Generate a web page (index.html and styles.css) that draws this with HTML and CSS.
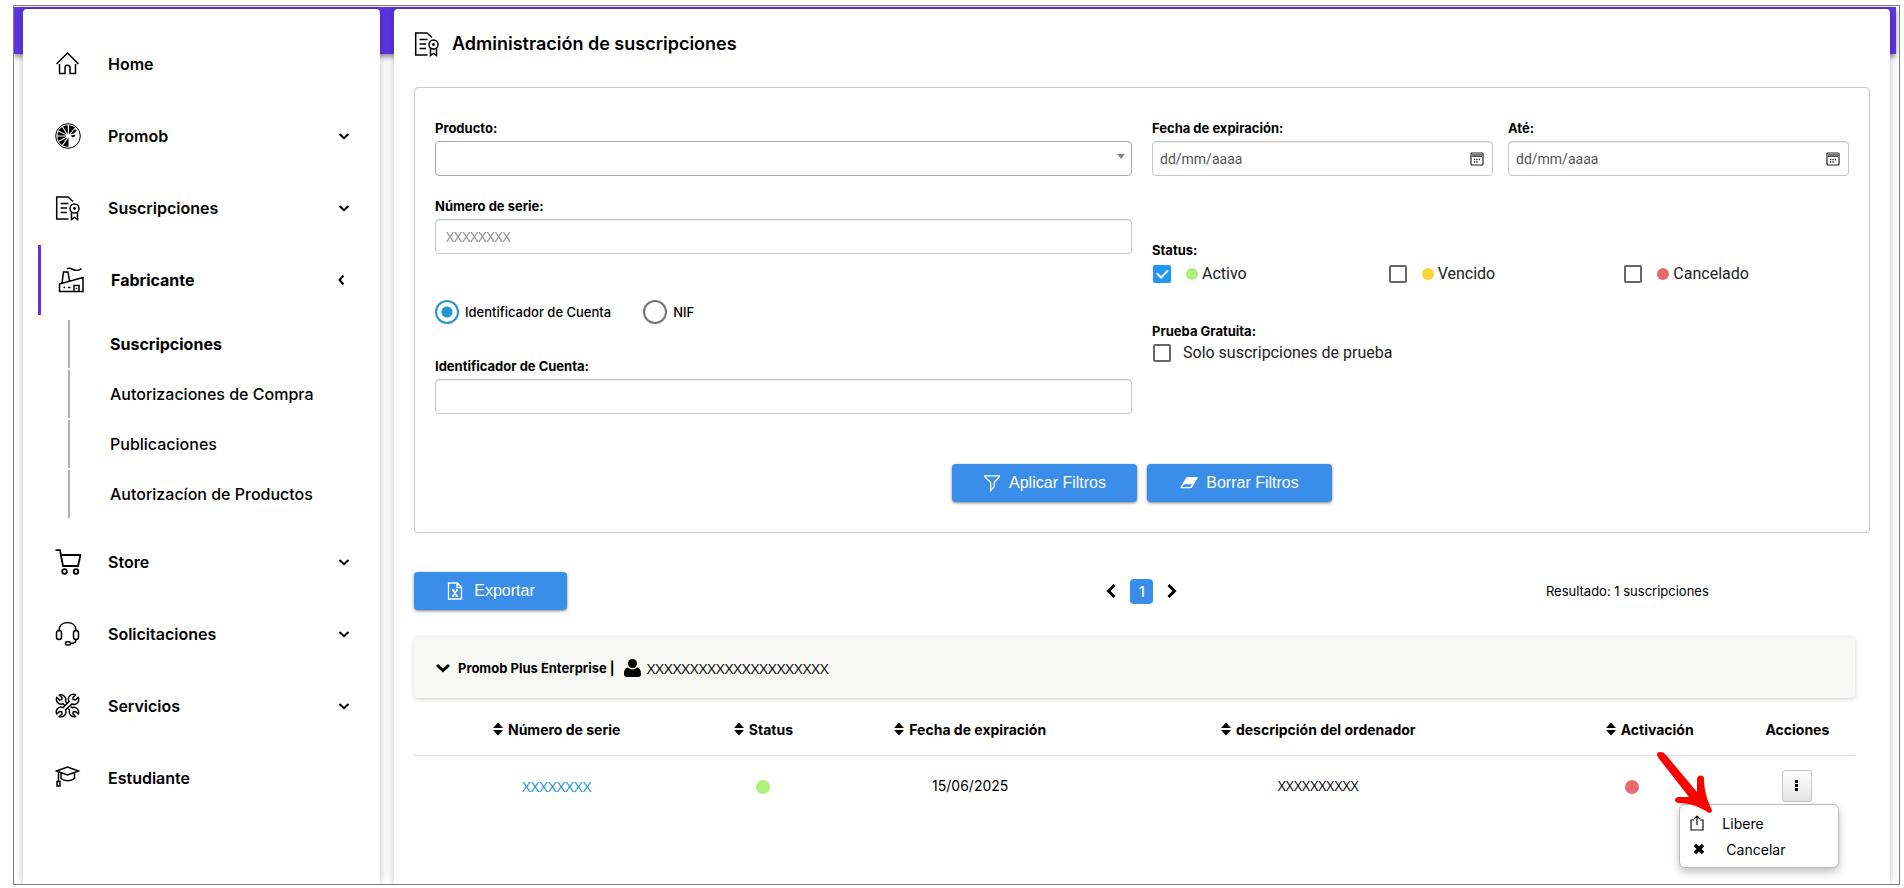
FILE: index.html
```html
<!DOCTYPE html>
<html lang="es">
<head>
  <meta charset="UTF-8">
  <title>Administración de suscripciones</title>
  <link rel="stylesheet" href="styles.css">
</head>
<body>
  <!-- Shared icons -->
  <svg class="sprite" aria-hidden="true">
    <symbol id="ico-doc" viewBox="0 0 26 26">
      <path d="M13.500 24H1.700V2H13l5 4.500M5.500 8.500h8M5.500 13h6.500M5.500 17.500h6.500"/>
      <circle cx="19.500" cy="13.500" r="4.500"/>
      <circle cx="19.500" cy="13.500" r="0.700"/>
      <path d="M16.500 17.500V24.500l3-2 3 2V17.500"/>
    </symbol>
    <symbol id="ico-down" viewBox="0 0 12 12">
      <path d="M1.500 4L6 8.200 10.500 4"/>
    </symbol>
    <symbol id="ico-sort" viewBox="0 0 10 14">
      <path d="M5 0.500L10 6H0zM5 13.500L10 8H0z"/>
    </symbol>
    <symbol id="ico-calendar" viewBox="0 0 14 14">
      <rect x="1" y="1" width="12" height="12" rx="1" fill="none" stroke="#222" stroke-width="1.200"/>
      <path d="M2 2h10v2H2z" fill="#777"/>
      <path d="M2 4.500h10" stroke="#222" stroke-width="0.800"/>
      <path d="M4 7.500h1.300M6.400 7.500h1.300M8.800 7.500h1.300M4 10h1.300M6.400 10h1.300" stroke="#222" stroke-width="1.300"/>
    </symbol>
  </svg>

  <div class="frame">
    <div class="topbar"></div>

    <div class="shell">
      <nav class="sidebar">
        <ul class="menu">
          <li><a class="menu-item" href="#">
            <svg class="ico" viewBox="0 0 26 26"><path d="M1.500 13L12.500 2 23.500 13M4.500 13v9.500h5.500v-6c0-3 5-3 5 0v6h5.500V13"/></svg>
            <span>Home</span>
          </a></li>
          <li><a class="menu-item" href="#">
            <svg class="ico thin" viewBox="0 0 26 26">
              <circle cx="13" cy="13" r="12.300"/>
              <path class="solid" d="M12.800 11.500L8 3.700Q10.500 2.300 12.800 2.300zM14 11.500V2.300Q17.500 2.500 20 4.500zM11.800 11.800L3.500 7.500Q5 5 7.200 4.200zM11.500 12.600H2.500Q2.500 10.500 3.200 8.600zM11.500 13.600L3.300 18Q2.500 16 2.500 13.600zM12.300 14.300L7 22Q4.800 20.500 3.800 19zM13.500 14.500V23.700Q10.500 23.700 8 22.500zM15.500 11l4.500-5 1.500 1.500-2.500 3zM16 12.500l4.500-1-1 2.300-2.500.500z"/>
            </svg>
            <span>Promob</span>
            <svg class="arrow"><use href="#ico-down"/></svg>
          </a></li>
          <li><a class="menu-item" href="#">
            <svg class="ico"><use href="#ico-doc"/></svg>
            <span>Suscripciones</span>
            <svg class="arrow"><use href="#ico-down"/></svg>
          </a></li>
          <li><a class="menu-item active" href="#">
            <svg class="ico" viewBox="0 0 26 26">
              <path d="M1.500 17L25 10.500V24.500H1.500zM4 16L5.500 5h4.500l1.500 9M9 2c2-1.500 4-.500 6 .500s6 1.500 8.500-1M16 24v-5.500h5V24"/>
              <path d="M5.500 20.500H7M10 20.500h2.500M18.500 21v1"/>
            </svg>
            <span>Fabricante</span>
            <svg class="arrow" viewBox="0 0 12 12"><path d="M5.500 1.500L1.500 6 5.500 10.500"/></svg>
          </a>
            <ul class="submenu">
              <li><a class="current" href="#">Suscripciones</a></li>
              <li><a href="#">Autorizaciones de Compra</a></li>
              <li><a href="#">Publicaciones</a></li>
              <li><a href="#">Autorizacíon de Productos</a></li>
            </ul>
          </li>
          <li><a class="menu-item" href="#">
            <svg class="ico thick" viewBox="0 0 26 26">
              <path d="M0.500 1.200h4.500L8 17h15L25.500 6H6"/>
              <circle cx="9.500" cy="22.500" r="2.300"/><circle cx="21" cy="22.500" r="2.300"/>
            </svg>
            <span>Store</span>
            <svg class="arrow"><use href="#ico-down"/></svg>
          </a></li>
          <li><a class="menu-item" href="#">
            <svg class="ico" viewBox="0 0 26 26">
              <path d="M4 9.500C4 5 7 1.500 12.500 1.500S21 5 21 9.500M21 18.500c0 3-2 4-5.500 4"/>
              <rect x="1.500" y="9.500" width="5" height="9" rx="2.500"/>
              <rect x="18.500" y="9.500" width="5" height="9" rx="2.500"/>
              <rect x="10.500" y="20.800" width="5" height="3.200" rx="1.600"/>
            </svg>
            <span>Solicitaciones</span>
            <svg class="arrow"><use href="#ico-down"/></svg>
          </a></li>
          <li><a class="menu-item" href="#">
            <svg class="ico" viewBox="0 0 26 26">
              <path d="M20.500 2A4.800 4.800 0 0 0 14 8.500L8 14.500A4.800 4.800 0 0 0 1.800 21L4.500 18.500 6.800 18.800 7 21 4.500 23.500A4.800 4.800 0 0 0 10.500 17L17 11A4.800 4.800 0 0 0 23.200 4.500L20.500 7 18.200 6.700 18 4.500z"/>
              <path d="M11.500 10L10.500 8A4.800 4.800 0 0 0 4.500 2L7 4.500 6.800 6.700 4.500 7 1.800 4.500A4.800 4.800 0 0 0 8 10.800L9.500 12M13.500 15.500L14.500 17.500A4.800 4.800 0 0 0 20.500 23.500L18 21 18.200 18.800 20.500 18.500 23.200 21A4.800 4.800 0 0 0 17 14.700L15.500 13.500"/>
            </svg>
            <span>Servicios</span>
            <svg class="arrow"><use href="#ico-down"/></svg>
          </a></li>
          <li><a class="menu-item" href="#">
            <svg class="ico" viewBox="0 0 26 26">
              <path d="M1.500 6L12.500 2 23.500 6 12.500 10zM6 8v5.500c3 3 10.500 3 13.500 0V8M3.500 7v9.500M2 16.500h3v4.500H2z"/>
            </svg>
            <span>Estudiante</span>
          </a></li>
        </ul>
      </nav>

      <main class="content">
        <h1 class="page-title">
          <svg class="ico"><use href="#ico-doc"/></svg>
          Administración de suscripciones
        </h1>

        <form class="filters">
          <div class="filter-grid">
            <div class="column">
              <div class="field">
                <label for="producto">Producto:</label>
                <div class="select-wrap">
                  <select id="producto" class="control"><option></option></select>
                </div>
              </div>
              <div class="field">
                <label for="serie">Número de serie:</label>
                <input type="text" id="serie" class="control" placeholder="XXXXXXXX">
              </div>
              <div class="radios">
                <label><input type="radio" name="tipo" checked> Identificador de Cuenta</label>
                <label><input type="radio" name="tipo"> NIF</label>
              </div>
              <div class="field">
                <label for="cuenta">Identificador de Cuenta:</label>
                <input type="text" id="cuenta" class="control">
              </div>
            </div>

            <div class="column">
              <div class="dates">
                <div class="field">
                  <label for="desde">Fecha de expiración:</label>
                  <div class="control date">
                    <input type="text" id="desde" placeholder="dd/mm/aaaa">
                    <button type="button" aria-label="Abrir calendario"><svg><use href="#ico-calendar"/></svg></button>
                  </div>
                </div>
                <div class="field">
                  <label for="hasta">Até:</label>
                  <div class="control date">
                    <input type="text" id="hasta" placeholder="dd/mm/aaaa">
                    <button type="button" aria-label="Abrir calendario"><svg><use href="#ico-calendar"/></svg></button>
                  </div>
                </div>
              </div>
              <div class="checks status">
                <h2>Status:</h2>
                <div class="check-row">
                  <label><input type="checkbox" checked><i class="dot green"></i>Activo</label>
                  <label><input type="checkbox"><i class="dot yellow"></i>Vencido</label>
                  <label><input type="checkbox"><i class="dot red"></i>Cancelado</label>
                </div>
              </div>
              <div class="checks trial">
                <h2>Prueba Gratuita:</h2>
                <label><input type="checkbox">Solo suscripciones de prueba</label>
              </div>
            </div>
          </div>

          <div class="filter-actions">
            <button type="button" class="btn btn-filter">
              <svg viewBox="0 0 18 18"><path d="M1.500 1.800h15c.300 2-4.800 4.500-5.300 7v4l-3.500 3.700V8.800C7.200 6.300 1.200 3.800 1.500 1.800z" fill="none" stroke="#fff" stroke-width="1.300"/></svg>
              Aplicar Filtros
            </button>
            <button type="button" class="btn btn-filter">
              <svg viewBox="0 0 18 18"><path d="M7.500 3h9.700c.500 0 .800.500.500 1L12 13.500c-.300.500-.800.800-1.300.800H1c-.500 0-.800-.500-.500-1L6.200 3.800c.300-.500.800-.800 1.300-.800zM4 10.200L2.200 13h8l1.800-2.800z" fill="#fff" fill-rule="evenodd"/></svg>
              Borrar Filtros
            </button>
          </div>
        </form>

        <div class="toolbar">
          <button type="button" class="btn btn-export">
            <svg viewBox="0 0 18 18"><path d="M2.500 1h9l4 4v12h-13zM11 1v4.500h4.500M6 8h2.500M10 8h2M6 14h2M9.500 14H12M6.700 8l4.300 6M11.200 8l-4.300 6" fill="none" stroke="#fff" stroke-width="1.300"/></svg>
            Exportar
          </button>
          <div class="pager">
            <button type="button" aria-label="Anterior"><svg viewBox="0 0 10 14"><path d="M8.500 1L2.500 7l6 6"/></svg></button>
            <button type="button" class="page">1</button>
            <button type="button" aria-label="Siguiente"><svg viewBox="0 0 10 14"><path d="M1.500 1l6 6-6 6"/></svg></button>
          </div>
          <p class="result">Resultado: 1 suscripciones</p>
        </div>

        <section class="results">
          <div class="group">
            <svg class="group-arrow" viewBox="0 0 14 10"><path d="M1 2l6 5.500L13 2"/></svg>
            <strong>Promob Plus Enterprise |</strong>
            <svg class="user" viewBox="0 0 17 18"><ellipse cx="8.500" cy="4.500" rx="4.500" ry="4.500"/><path d="M4 8.500c2.500 2.500 6.500 2.500 9 0 3 .500 4 3 4 6.500 0 2-1 3-3 3H3c-2 0-3-1-3-3 0-3.500 1-6 4-6.500z"/></svg>
            <span class="masked">XXXXXXXXXXXXXXXXXXXXX</span>
          </div>

          <table>
            <thead>
              <tr>
                <th class="col-serie"><svg class="sort"><use href="#ico-sort"/></svg>Número de serie</th>
                <th class="col-status"><svg class="sort"><use href="#ico-sort"/></svg>Status</th>
                <th class="col-fecha"><svg class="sort"><use href="#ico-sort"/></svg>Fecha de expiración</th>
                <th class="col-desc"><svg class="sort"><use href="#ico-sort"/></svg>descripción del ordenador</th>
                <th class="col-activ"><svg class="sort"><use href="#ico-sort"/></svg>Activación</th>
                <th class="col-acc">Acciones</th>
              </tr>
            </thead>
            <tbody>
              <tr>
                <td><a class="masked" href="#">XXXXXXXX</a></td>
                <td><i class="dot big green"></i></td>
                <td>15/06/2025</td>
                <td class="masked-small">XXXXXXXXXX</td>
                <td><i class="dot big red"></i></td>
                <td>
                  <div class="actions">
                    <button type="button" class="more" aria-label="Acciones"><svg viewBox="0 0 4 12"><path d="M0 0h3v3H0zM0 4h3v3H0zM0 8h3v3H0z"/></svg></button>
                    <div class="dropdown">
                      <button type="button">
                        <svg viewBox="0 0 14 16"><path d="M4 5H1v10h12V5h-3M7 10V1M4 4l3-3 3 3" fill="none" stroke="#111" stroke-width="1.200"/></svg>
                        Libere
                      </button>
                      <button type="button" class="cancel">
                        <svg viewBox="0 0 14 14"><path d="M3 3l8 8M11 3l-8 8" stroke="#000" stroke-width="3.600"/></svg>
                        Cancelar
                      </button>
                    </div>
                    <svg class="pointer" viewBox="0 0 56 62"><path d="M2.500 6C0 2 1 0 4 0s4 1 6 3l31 37V27c0-4 6-5 7-1 0 12 3 22 8 32 0 2-1 3-3 3-9-6-18-10-31-10-4-1-4-5 0-6h11z"/></svg>
                  </div>
                </td>
              </tr>
            </tbody>
          </table>
        </section>
      </main>
    </div>
  </div>
</body>
</html>
```
FILE: styles.css
```css
* {
  box-sizing: border-box;
}
body {
  margin: 0;
  background: #fff;
  color: #000;
  font-family: Inter, "Liberation Sans", sans-serif;
  font-size: 14px;
  line-height: 20px;
}
a {
  color: inherit;
  text-decoration: none;
}
ul {
  margin: 0;
  padding: 0;
  list-style: none;
}
button {
  padding: 0;
  border: none;
  background: none;
  color: inherit;
  font-family: inherit;
  font-size: 14px;
  cursor: pointer;
}
.sprite {
  display: none;
}

/* Frame and panels */
.frame {
  display: flex;
  flex-direction: column;
  min-height: calc(100vh - 8px);
  margin: 5px 4px 3px 13px;
  padding-top: 1px;
  border: 1px solid #7f7f7f;
  overflow: hidden;
}
.topbar {
  flex: none;
  height: 47px;
  margin-right: 3px;
  background: #5e35e3;
  box-shadow: 0 3px 5px rgba(0,0,0,0.4);
}
.shell {
  display: flex;
  flex: 1;
  gap: 14px;
  margin-top: -45px;
  padding: 0 9px;
}
.sidebar, .content {
  position: relative;
  background: #fff;
  border-radius: 4px 4px 0 0;
  box-shadow: 0 0 9px rgba(0,0,0,0.25);
}
.sidebar {
  flex: none;
  width: 357px;
  padding: 20px 0 0 15px;
}
.content {
  flex: 1;
  min-width: 0;
  padding: 18px 20px 0;
}

/* Icons */
.ico {
  flex: none;
  width: 26px;
  height: 26px;
  fill: none;
  stroke: #000;
  stroke-width: 1.5;
}
.ico .solid {
  fill: #000;
  stroke: none;
}
.ico.thin {
  stroke-width: 1;
}
.ico.thick {
  stroke-width: 1.8;
}

/* Sidebar */
.menu-item {
  display: flex;
  align-items: center;
  height: 70px;
  margin-bottom: 2px;
  padding: 0 30px 0 17px;
  font-size: 16px;
  font-weight: 600;
}
.menu-item span {
  flex: 1;
  margin-left: 27px;
}
.menu-item.active {
  border-left: 3px solid #5e35e3;
  font-weight: 700;
}
.arrow {
  width: 12px;
  height: 12px;
  fill: none;
  stroke: #000;
  stroke-width: 2;
}
.submenu {
  margin: 5px 0 9px 30px;
}
.submenu a {
  display: flex;
  align-items: center;
  height: 48px;
  margin-bottom: 2px;
  padding-left: 40px;
  border-left: 2px solid #b0b0b0;
  font-size: 16px;
  font-weight: 500;
}
.submenu a.current {
  font-weight: 700;
}

/* Title */
.page-title {
  display: flex;
  align-items: center;
  gap: 12px;
  margin: 0 0 26px;
  height: 34px;
  font-size: 18px;
  font-weight: 600;
}

/* Filters */
.filters {
  padding: 30px 20px;
  border: 1px solid #c9c9c9;
  border-radius: 4px;
}
.filter-grid {
  display: grid;
  grid-template-columns: 1fr 1fr;
  gap: 20px;
}
.field {
  margin-bottom: 20px;
}
.field > label, .checks h2 {
  display: block;
  margin: 0 0 3px;
  font-family: Inter, "Liberation Sans", sans-serif;
  font-size: 13px;
  font-weight: 700;
  line-height: 20px;
}
.control {
  display: block;
  width: 100%;
  height: 35px;
  padding: 0 10px;
  background: #fff;
  border: 1px solid #c6c6c6;
  border-radius: 4px;
  box-shadow: inset 0 1px 1px rgba(0,0,0,0.08);
  font-family: "Open Sans", sans-serif;
  font-size: 14px;
}
.control::placeholder {
  color: #8a8a8a;
}
.select-wrap {
  position: relative;
}
.select-wrap::after {
  content: "";
  position: absolute;
  top: 13px;
  right: 7px;
  border: 4px solid transparent;
  border-top: 5px solid #888;
}
.select-wrap select {
  appearance: none;
  border-color: #aaa;
  box-shadow: none;
}
.radios {
  display: flex;
  gap: 32px;
  margin: 46px 0 32px;
}
.radios label {
  display: flex;
  align-items: center;
  gap: 6px;
  font-size: 13px;
  font-weight: 500;
}
.radios input {
  appearance: none;
  width: 24px;
  height: 24px;
  margin: 0;
  border: 2px solid #757575;
  border-radius: 50%;
}
.radios input:checked {
  border-color: #2196d3;
  background: radial-gradient(circle, #2196d3 5px, #fff 6px);
}
.column > .field:last-child {
  margin-bottom: 0;
}
.dates {
  display: grid;
  grid-template-columns: 1fr 1fr;
  gap: 15px;
}
.date {
  display: flex;
  align-items: center;
  padding: 0 8px 0 7px;
}
.date input {
  flex: 1;
  min-width: 0;
  padding: 0;
  border: none;
  outline: none;
  background: none;
  font-family: Roboto, sans-serif;
  font-size: 14px;
}
.date input::placeholder {
  color: #555;
}
.date svg {
  display: block;
  width: 14px;
  height: 14px;
}
.checks {
  color: #222;
}
.checks h2 {
  color: #000;
}
.checks label {
  display: flex;
  align-items: center;
  height: 18px;
  font-family: Roboto, sans-serif;
  font-size: 16px;
}
.status {
  margin: 44px 0 38px;
}
.check-row {
  display: grid;
  grid-template-columns: repeat(3, 1fr);
  gap: 10px;
  padding-top: 2px;
}
.checks input {
  appearance: none;
  width: 18px;
  height: 18px;
  margin: 0 12px 0 1px;
  border: 2px solid #666;
  border-radius: 2px;
}
.checks input:checked {
  display: grid;
  place-items: center;
  border-color: #2196f3;
  background: #2196f3;
}
.checks input:checked::after {
  content: "";
  width: 5px;
  height: 9px;
  margin-bottom: 3px;
  border: solid #fff;
  border-width: 0 2px 2px 0;
  transform: rotate(45deg);
}
.dot {
  display: inline-block;
  width: 12px;
  height: 12px;
  margin: 0 4px 0 3px;
  border-radius: 50%;
}
.dot.big {
  width: 14px;
  height: 14px;
  margin: 0;
  vertical-align: middle;
}
.green {
  background: #aef07c;
}
.yellow {
  background: #fdd338;
}
.red {
  background: #e96a6c;
}
.filter-actions {
  display: flex;
  justify-content: center;
  gap: 10px;
  margin-top: 50px;
}
.btn {
  display: flex;
  align-items: center;
  justify-content: center;
  height: 38px;
  border-radius: 4px;
  background: #3a8eea;
  box-shadow: 0 1px 3px rgba(0,0,0,0.5);
  color: #fff;
  font-family: "Liberation Sans", Arial, sans-serif;
  font-size: 16px;
}
.btn svg {
  width: 18px;
  height: 18px;
}
.btn-filter {
  gap: 8px;
  width: 185px;
}
.btn-export {
  gap: 10px;
  width: 153px;
}

/* Toolbar */
.toolbar {
  display: grid;
  grid-template-columns: repeat(3, 1fr);
  align-items: center;
  margin: 39px 0 27px;
}
.pager {
  display: flex;
  align-items: center;
  justify-content: center;
  gap: 14px;
}
.pager svg {
  display: block;
  width: 10px;
  height: 14px;
  fill: none;
  stroke: #000;
  stroke-width: 3;
}
.page {
  width: 23px;
  height: 25px;
  border-radius: 4px;
  background: #3a8eea;
  color: #fff;
  font-weight: 500;
}
.result {
  margin: 0;
  font-size: 13px;
  text-align: center;
}

/* Results */
.results {
  margin-right: 15px;
}
.group {
  display: flex;
  align-items: center;
  height: 61px;
  padding-left: 22px;
  background: #f8f8f6;
  border-radius: 4px;
  box-shadow: 0 1px 4px rgba(0,0,0,0.2);
}
.group strong {
  margin: 0 9px 0 8px;
  font-size: 13px;
  font-weight: 700;
}
.group-arrow {
  width: 14px;
  height: 10px;
  fill: none;
  stroke: #000;
  stroke-width: 3;
}
.user {
  width: 17px;
  height: 18px;
  margin-right: 6px;
}
.masked {
  font-family: "Open Sans", sans-serif;
  font-size: 15px;
}
a.masked {
  color: #1a8fd1;
}
table {
  width: 100%;
  table-layout: fixed;
  border-collapse: collapse;
}
th {
  height: 57px;
  padding: 7px 0 0;
  border-bottom: 1px solid #dcdcdc;
  font-size: 14px;
  font-weight: 700;
}
td {
  height: 62px;
  padding: 0;
  text-align: center;
}
.masked-small {
  font-family: "Open Sans", sans-serif;
}
.col-serie, .col-fecha {
  width: 19.8%;
}
.col-status {
  width: 8.9%;
}
.col-activ {
  width: 15%;
  padding-left: 36px;
}
.col-acc {
  width: 8%;
}
.sort {
  width: 10px;
  height: 14px;
  margin-right: 5px;
  vertical-align: -1px;
}

/* Row actions */
.actions {
  position: relative;
  width: 30px;
  margin: 0 auto;
}
.more {
  display: flex;
  align-items: center;
  justify-content: center;
  width: 30px;
  height: 32px;
  border: 1px solid #c4c4c4;
  border-radius: 3px;
  background: linear-gradient(#fff, #e4e4e4);
}
.more svg {
  width: 4px;
  height: 12px;
}
.dropdown {
  position: absolute;
  top: 34px;
  right: -27px;
  width: 160px;
  padding: 5px 10px;
  background: #fff;
  border: 1px solid #bbb;
  border-radius: 6px;
  box-shadow: 0 4px 9px rgba(0,0,0,0.25);
}
.dropdown button {
  display: flex;
  align-items: center;
  gap: 18px;
  width: 100%;
  height: 26px;
}
.dropdown svg {
  width: 14px;
  height: 16px;
}
.dropdown .cancel {
  gap: 20px;
  padding-left: 2px;
}
.pointer {
  position: absolute;
  top: -18px;
  left: -126px;
  width: 56px;
  height: 62px;
  fill: #f00;
}
```
